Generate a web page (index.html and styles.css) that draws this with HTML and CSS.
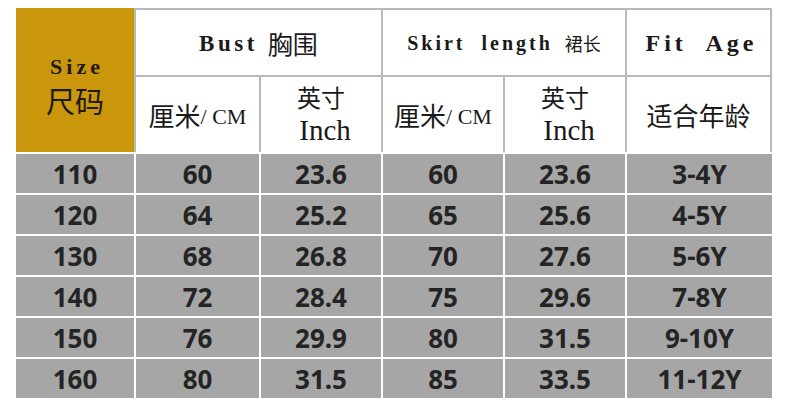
FILE: index.html
```html
<!DOCTYPE html>
<html lang="zh">
<head>
<meta charset="utf-8">
<title>Size chart</title>
<link rel="stylesheet" href="styles.css">
</head>
<body>
<div class="chart">
  <div class="head">
    <div class="size-cell">
      <span class="en size-en">Size</span>
      <span class="zh size-zh">尺码</span>
    </div>
    <div class="hcell span2 top"><span class="en bust">Bust</span><span class="zh bust-zh">胸围</span></div>
    <div class="hcell span2 top"><span class="en skirt">Skirt&nbsp; length</span><span class="zh skirt-zh">裙长</span></div>
    <div class="hcell top last"><span class="en fit">Fit&nbsp; Age</span></div>
    <div class="hcell"><span class="zh unit-zh">厘米</span><span class="en unit-en">/ CM</span></div>
    <div class="hcell stack"><span class="zh inch-zh">英寸</span><span class="en inch-en">Inch</span></div>
    <div class="hcell"><span class="zh unit-zh">厘米</span><span class="en unit-en">/ CM</span></div>
    <div class="hcell stack"><span class="zh inch-zh">英寸</span><span class="en inch-en">Inch</span></div>
    <div class="hcell last"><span class="zh age-zh">适合年龄</span></div>
  </div>
  <div class="body">
    <div class="d">110</div><div class="d">60</div><div class="d">23.6</div><div class="d">60</div><div class="d">23.6</div><div class="d">3-4Y</div>
    <div class="d">120</div><div class="d">64</div><div class="d">25.2</div><div class="d">65</div><div class="d">25.6</div><div class="d">4-5Y</div>
    <div class="d">130</div><div class="d">68</div><div class="d">26.8</div><div class="d">70</div><div class="d">27.6</div><div class="d">5-6Y</div>
    <div class="d">140</div><div class="d">72</div><div class="d">28.4</div><div class="d">75</div><div class="d">29.6</div><div class="d">7-8Y</div>
    <div class="d">150</div><div class="d">76</div><div class="d">29.9</div><div class="d">80</div><div class="d">31.5</div><div class="d">9-10Y</div>
    <div class="d">160</div><div class="d">80</div><div class="d">31.5</div><div class="d">85</div><div class="d">33.5</div><div class="d">11-12Y</div>
  </div>
</div>
</body>
</html>
```

FILE: styles.css
```css
html, body {
  margin: 0;
  padding: 0;
  background: #ffffff;
}

.chart {
  width: 756px;
  margin: 8px 0 0 16px;
}

.en {
  font-family: "Liberation Serif", "Times New Roman", serif;
}

.zh {
  font-family: "Noto Sans CJK SC", "Noto Sans", sans-serif;
  font-weight: 400;
}

.head {
  display: grid;
  grid-template-columns: 118px 123px 120px 120px 120px 145px;
  grid-template-rows: 65px 75px;
  gap: 2px;
  padding-top: 2px;
  background: #b9b9b9;
  color: #1a1a1a;
}

.size-cell {
  grid-row: 1 / span 2;
  background: #c9960c;
  margin-top: -2px;
  display: flex;
  flex-direction: column;
  align-items: center;
  justify-content: flex-start;
  padding-top: 46px;
  color: #1e1a10;
}

.size-en {
  font-weight: 700;
  font-size: 22px;
  letter-spacing: 4px;
  line-height: normal;
  margin-left: 4px;
}

.size-zh {
  font-size: 29px;
  line-height: normal;
  margin-top: -1px;
}

.hcell {
  background: #ffffff;
  display: flex;
  align-items: center;
  justify-content: center;
  box-sizing: border-box;
}

.span2 {
  grid-column: span 2;
}

.last {
  border-right: 2px solid #b9b9b9;
}

.stack {
  flex-direction: column;
  justify-content: flex-start;
  padding-top: 2px;
}

.bust {
  font-weight: 700;
  font-size: 23px;
  letter-spacing: 3.5px;
  margin-right: 10px;
  margin-top: 2px;
}

.bust-zh {
  font-size: 25px;
}

.skirt {
  font-weight: 700;
  font-size: 20px;
  letter-spacing: 3px;
  margin-right: 12px;
  margin-top: 2px;
}

.skirt-zh {
  font-size: 18px;
}

.fit {
  font-weight: 700;
  font-size: 24px;
  letter-spacing: 4px;
  margin-top: 2px;
  margin-left: 6px;
}

.unit-zh {
  font-size: 26px;
}

.unit-en {
  font-size: 22px;
  margin-top: 4px;
}

.inch-zh {
  font-size: 24px;
  line-height: normal;
}

.inch-en {
  font-size: 29px;
  line-height: normal;
  margin-left: 8px;
}

.age-zh {
  font-size: 26px;
}

.body {
  display: grid;
  grid-template-columns: 118px 123px 120px 120px 120px 145px;
  grid-auto-rows: 39px;
  gap: 2px;
  margin-top: 2px;
  background: #ffffff;
}

.d {
  background: #a6a6a6;
  color: #242424;
  font-family: "Noto Sans", "DejaVu Sans", sans-serif;
  font-weight: 700;
  font-size: 26px;
  display: flex;
  align-items: center;
  justify-content: center;
  line-height: 1;
}
```
